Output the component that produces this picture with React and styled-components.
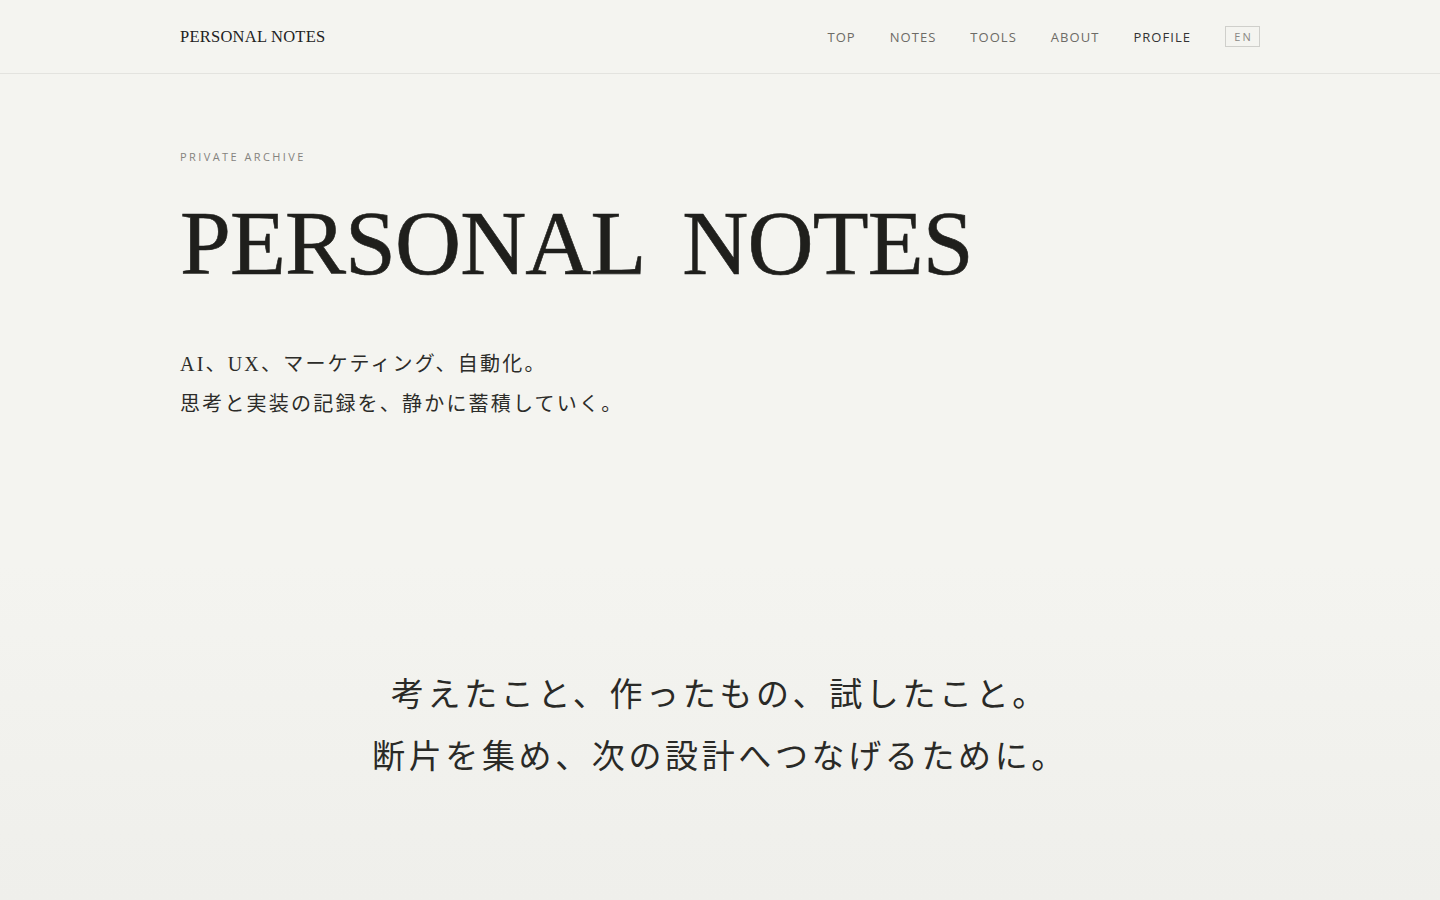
import React from "react";
import styled, { createGlobalStyle } from "styled-components";

const GlobalStyle = createGlobalStyle`
  * { box-sizing: border-box; }
  html, body { margin: 0; padding: 0; }
  body {
    background: #f4f4f0;
    color: #222;
    font-family: "Liberation Serif", "Noto Sans CJK JP", serif;
    -webkit-font-smoothing: antialiased;
  }
`;

const SERIF = `"Liberation Serif", "Noto Sans CJK JP", serif`;
const SANS = `"Open Sans", "Noto Sans", "Noto Sans CJK JP", sans-serif`;

const Page = styled.div`
  min-height: 900px;
  display: flex;
  flex-direction: column;
  background: #f4f4f0;
`;

const Header = styled.header`
  height: 74px;
  border-bottom: 1px solid #e3e3df;
  display: flex;
  align-items: center;
`;

const Container = styled.div`
  width: 1080px;
  margin: 0 auto;
`;

const HeaderInner = styled(Container)`
  display: flex;
  align-items: center;
  justify-content: space-between;
`;

const Logo = styled.a`
  font-family: ${SERIF};
  font-size: 16.5px;
  color: #222;
  text-decoration: none;
  letter-spacing: 0.015em;
  padding-top: 1px;
`;

const Nav = styled.nav`
  display: flex;
  align-items: center;
  gap: 34px;
`;

const NavLink = styled.a`
  font-family: ${SANS};
  font-size: 13px;
  letter-spacing: 0.08em;
  color: ${(p) => (p.$active ? "#333" : "#6d6b66")};
  text-decoration: none;
`;

const LangButton = styled.button`
  font-family: ${SANS};
  font-size: 11px;
  letter-spacing: 0.18em;
  color: #8a8884;
  background: transparent;
  border: 1px solid #cfcfcb;
  height: 21px;
  width: 35px;
  padding: 0 0 0 2px;
  display: flex;
  align-items: center;
  justify-content: center;
`;

const Hero = styled.section`
  padding: 75px 0 140px;
`;

const Eyebrow = styled.p`
  margin: 0;
  font-family: ${SANS};
  font-size: 11px;
  line-height: 16px;
  letter-spacing: 0.22em;
  color: #85837e;
`;

const Title = styled.h1`
  margin: 28px 0 0;
  font-family: ${SERIF};
  font-weight: 400;
  font-size: 91.5px;
  line-height: 1.1;
  letter-spacing: -0.01em;
  word-spacing: 0.2em;
  color: #1f1f1c;
  -webkit-text-stroke: 0.6px #1f1f1c;
`;

const Lead = styled.p`
  margin: 50px 0 0;
  font-family: ${SERIF};
  font-size: 20px;
  line-height: 40px;
  letter-spacing: 0.11em;
  color: #2c2c29;
`;

const QuoteSection = styled.section`
  flex: 1;
  padding: 100px 0 108px;
  background: linear-gradient(to bottom, #f4f4f0 0%, #efefeb 100%);
`;

const Quote = styled.p`
  margin: 0;
  text-align: center;
  font-family: ${SERIF};
  font-size: 33px;
  line-height: 62px;
  letter-spacing: 0.11em;
  color: #2a2a27;
`;

const navItems = ["TOP", "NOTES", "TOOLS", "ABOUT", "PROFILE"];

export default function App() {
  return (
    <>
      <GlobalStyle />
      <Page>
        <Header>
          <HeaderInner>
            <Logo href="#">PERSONAL NOTES</Logo>
            <Nav>
              {navItems.map((item) => (
                <NavLink key={item} href="#" $active={item === "PROFILE"}>
                  {item}
                </NavLink>
              ))}
              <LangButton>EN</LangButton>
            </Nav>
          </HeaderInner>
        </Header>
        <Hero>
          <Container>
            <Eyebrow>PRIVATE ARCHIVE</Eyebrow>
            <Title>PERSONAL NOTES</Title>
            <Lead>
              AI、UX、マーケティング、自動化。
              <br />
              思考と実装の記録を、静かに蓄積していく。
            </Lead>
          </Container>
        </Hero>
        <QuoteSection>
          <Quote>
            考えたこと、作ったもの、試したこと。
            <br />
            断片を集め、次の設計へつなげるために。
          </Quote>
        </QuoteSection>
      </Page>
    </>
  );
}
